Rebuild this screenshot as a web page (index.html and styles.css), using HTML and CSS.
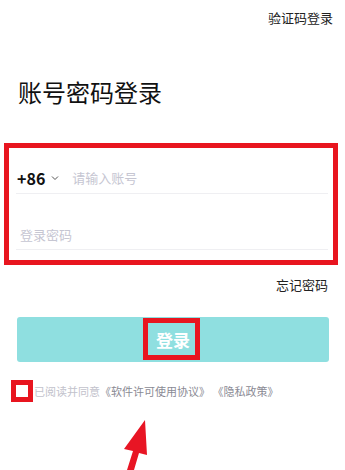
FILE: index.html
```html
<!DOCTYPE html>
<html lang="zh-CN">
<head>
<meta charset="utf-8">
<link rel="stylesheet" href="styles.css">
</head>
<body>
<div class="page">
  <div class="topbar"><span class="switch">验证码登录</span></div>
  <h1 class="title">账号密码登录</h1>
  <div class="form mark">
    <div class="row row-phone">
      <span class="code">+86</span>
      <svg class="chev" width="8" height="6" viewBox="0 0 8 6"><path d="M1 1.5 L4 4.5 L7 1.5" fill="none" stroke="#555" stroke-width="1"/></svg>
      <span class="ph ph-account">请输入账号</span>
    </div>
    <div class="row row-pass">
      <span class="ph">登录密码</span>
    </div>
  </div>
  <div class="forgot">忘记密码</div>
  <div class="btn-wrap">
    <button class="btn">登录</button>
    <span class="btn-mark"></span>
  </div>
  <div class="agree">
    <span class="check"></span>
    <span class="agree-text"><span class="muted">已阅读并同意</span>《软件许可使用协议》 《隐私政策》</span>
  </div>
  <svg class="arrow" width="40" height="60" viewBox="0 0 40 60">
    <path d="M25 0 L4 29 L13 31 L7 50 L14 50 L19 33 L27 35 Z" fill="#e81524"/>
  </svg>
</div>
</body>
</html>
```
FILE: styles.css
```css
html, body {
  margin: 0;
  padding: 0;
  background: #fff;
}
.page {
  position: relative;
  width: 345px;
  height: 470px;
  overflow: hidden;
  font-family: "Noto Sans CJK SC", "Noto Sans", sans-serif;
  color: #111;
}
.topbar {
  padding: 6px 12px 0 0;
  text-align: right;
  line-height: 20px;
  height: 20px;
}
.switch {
  font-size: 13px;
  color: #222;
}
.title {
  margin: 50px 0 0 18px;
  font-size: 24px;
  font-weight: 400;
  line-height: 32px;
  color: #111;
}
.form {
  margin: 35px 7px 0 4px;
  border: 5px solid #e8151f;
  padding: 0 5px 0 7px;
  height: 112px;
}
.row {
  display: flex;
  align-items: center;
  border-bottom: 1px solid #efeff2;
  line-height: 20px;
}
.row-phone {
  padding: 20px 0 5px 1px;
}
.row-pass {
  padding: 31px 0 4px 4px;
}
.code {
  font-size: 16px;
  font-weight: 700;
  color: #111;
}
.chev {
  margin: 0 0 0 6px;
}
.ph {
  font-size: 13px;
  color: #c6c6d2;
}
.ph-account {
  margin-left: 13px;
}
.forgot {
  margin-top: 10px;
  padding-right: 17px;
  text-align: right;
  font-size: 13px;
  line-height: 20px;
  color: #222;
}
.btn-wrap {
  position: relative;
  margin: 22px 16px 0 17px;
}
.btn {
  display: block;
  width: 100%;
  height: 45px;
  border: 0;
  border-radius: 3px;
  background: #8fdfe0;
  color: #fff;
  font-family: inherit;
  font-size: 17px;
  font-weight: 700;
  padding: 0;
}
.btn-mark {
  position: absolute;
  left: 126px;
  top: 1px;
  width: 47px;
  height: 32px;
  border: 5px solid #e8151f;
}
.agree {
  display: flex;
  align-items: center;
  margin: 18px 0 0 11px;
  height: 22px;
}
.check {
  box-sizing: border-box;
  width: 22px;
  height: 22px;
  border: 5px solid #e8151f;
  background: #fff;
  flex: none;
}
.agree-text {
  margin-left: 1px;
  font-size: 11px;
  color: #8a8a94;
  line-height: 16px;
  white-space: nowrap;
}
.muted {
  color: #c2c2cc;
}
.arrow {
  position: absolute;
  left: 120px;
  top: 420px;
}
```
